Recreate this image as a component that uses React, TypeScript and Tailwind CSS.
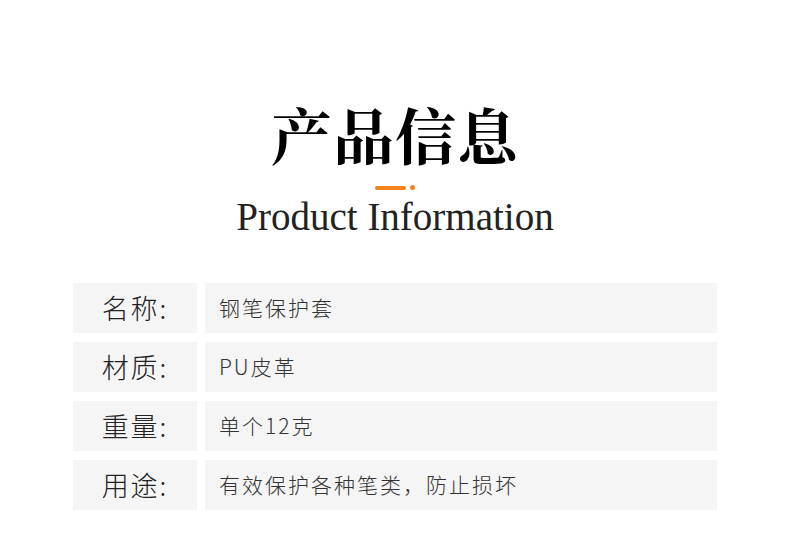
const rows = [
  { label: "名称:", value: "钢笔保护套" },
  { label: "材质:", value: "PU皮革" },
  { label: "重量:", value: "单个12克" },
  { label: "用途:", value: "有效保护各种笔类，防止损坏" },
];

export default function App() {
  return (
    <div className="h-[533px] w-[790px] bg-white" style={{ fontFamily: '"Noto Sans CJK SC", sans-serif' }}>
      <div className="flex flex-col items-center pt-[99px]">
        <h1
          className="text-[61px] font-bold leading-[70px] tracking-[1px] text-black"
          style={{ fontFamily: '"Noto Serif CJK SC", "Noto Sans CJK SC", serif' }}
        >
          产品信息
        </h1>
        <div className="mt-[16px] flex items-center gap-[4px]">
          <div className="h-[4px] w-[31px] rounded-full bg-[#f58220]" />
          <div className="h-[5px] w-[5px] rounded-full bg-[#f58220]" />
        </div>
        <p
          className="mt-[6px] text-[39px] leading-[42px] text-[#222]"
          style={{ fontFamily: '"Liberation Serif", serif' }}
        >
          Product Information
        </p>
      </div>

      <div className="mt-[45px] flex flex-col gap-[9px] pl-[73px] pr-[73px]">
        {rows.map((row) => (
          <div key={row.label} className="flex h-[50px] gap-[8px]">
            <div className="flex w-[124px] items-center justify-center bg-[#f5f5f5] text-[27px] font-light tracking-[2px] text-[#222]">
              {row.label}
            </div>
            <div className="flex flex-1 items-center bg-[#f5f5f5] pl-[14px] text-[21px] font-light tracking-[2px] text-[#333]">
              {row.value}
            </div>
          </div>
        ))}
      </div>
    </div>
  );
}
